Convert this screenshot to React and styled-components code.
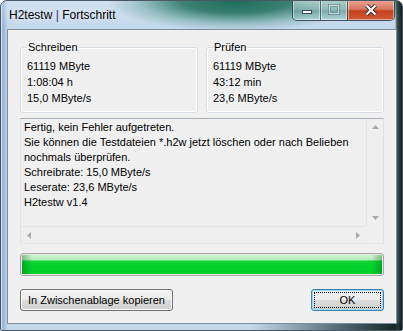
import React from "react";
import styled, { createGlobalStyle } from "styled-components";

const GlobalStyle = createGlobalStyle`
  html, body {
    margin: 0;
    padding: 0;
    background: #ffffff;
    overflow: hidden;
  }
`;

const Window = styled.div`
  box-sizing: border-box;
  width: 403px;
  height: 331px;
  display: flex;
  flex-direction: column;
  border: 1px solid #4a5866;
  border-radius: 7px 7px 2px 2px;
  overflow: hidden;
  font-family: "Liberation Sans", Arial, sans-serif;
  background:
    linear-gradient(to right, rgba(0, 0, 0, 0) 394px, rgba(40, 60, 60, 0.85) 396px, #0f1c1c 401px),
    linear-gradient(to right, rgba(255, 255, 255, 0) 0, rgba(255, 255, 255, 0) 250px, rgba(30, 60, 60, 0.7) 340px, #102020 400px) 0 100% / 100% 7px no-repeat,
    radial-gradient(130px 30px at 235px 0px, #1c6e58 0%, rgba(30, 110, 90, 0.85) 40%, rgba(60, 140, 120, 0.35) 75%, rgba(0, 0, 0, 0) 100%),
    radial-gradient(90px 22px at 365px 0px, rgba(35, 125, 100, 0.9), rgba(0, 0, 0, 0)),
    linear-gradient(to bottom, rgba(255, 255, 255, 0.25) 0px, rgba(255, 255, 255, 0) 28px),
    linear-gradient(to right, #dfe9f4 0px, #8fb0d2 2px, #aac6e3 4px, #c4d8ec 7px, #c4d8ec 100%);
`;

const TitleBar = styled.div`
  height: 28px;
  flex: none;
  display: flex;
  align-items: flex-start;
  justify-content: space-between;
  padding: 0 7px 0 8px;
`;

const Title = styled.span`
  margin-top: 7px;
  font-size: 12px;
  line-height: 15px;
  color: #000;
  text-shadow: 0 0 6px rgba(255, 255, 255, 0.9);
`;

const Pipe = styled.span`
  color: #3b1f8e;
`;

const CaptionGroup = styled.div`
  display: flex;
  margin-top: -1px;
  border: 1px solid rgba(45, 62, 80, 0.85);
  border-top: none;
  border-radius: 0 0 5px 5px;
  overflow: hidden;
`;

const CaptionButton = styled.div`
  width: ${(p) => p.$w}px;
  height: 20px;
  display: flex;
  align-items: center;
  justify-content: center;
  box-sizing: border-box;
  border-left: ${(p) => (p.$first ? "none" : "1px solid rgba(45, 62, 80, 0.7)")};
  box-shadow: inset 0 0 0 1px rgba(255, 255, 255, 0.45);
  background: ${(p) =>
    p.$close
      ? "linear-gradient(to bottom, #eaa596 0%, #d9785f 45%, #c4401e 55%, #cf5c36 100%)"
      : "linear-gradient(to bottom, rgba(255,255,255,0.55) 0%, rgba(205,225,235,0.35) 45%, rgba(120,170,170,0.35) 55%, rgba(170,210,215,0.45) 100%)"};
`;

const GlyphSvg = styled.svg`
  display: block;
  opacity: ${(p) => (p.$disabled ? 0.45 : 1)};
`;

const Client = styled.div`
  flex: 1;
  margin: 0 5px 6px 6px;
  border: 1px solid #7d8d9c;
  background: #f0f0f0;
  display: flex;
  flex-direction: column;
  padding: 10px 12px 12px 12px;
`;

const Groups = styled.div`
  display: grid;
  grid-template-columns: 178px 178px;
  column-gap: 8px;
`;

const Group = styled.fieldset`
  margin: 0;
  height: 73px;
  box-sizing: border-box;
  border: 1px solid #d5dfe5;
  border-radius: 3px;
  box-shadow: inset 0 0 0 1px #ffffff;
  padding: 0 6px 0 6px;
  min-width: 0;
`;

const Legend = styled.legend`
  font-size: 11px;
  line-height: 14px;
  padding: 0 1px;
  margin-left: 0;
  color: #000;
`;

const Value = styled.div`
  font-size: 11px;
  line-height: 16px;
  color: #000;
  white-space: nowrap;
  &:first-of-type {
    margin-top: 4px;
  }
`;

const LogBox = styled.div`
  margin-top: 5px;
  height: 126px;
  box-sizing: border-box;
  border: 1px solid #abadb3;
  border-left-color: #e2e3ea;
  border-right-color: #dbdfe6;
  border-bottom-color: #e3e9ef;
  background: #f0f0f0;
  display: grid;
  grid-template-columns: 1fr 17px;
  grid-template-rows: 1fr 17px;
`;

const LogText = styled.div`
  padding: 1px 3px 0 3px;
  font-size: 11px;
  line-height: 15px;
  color: #000;
  white-space: nowrap;
  overflow: hidden;
`;

const ScrollBar = styled.div`
  display: flex;
  flex-direction: ${(p) => (p.$vertical ? "column" : "row")};
  justify-content: space-between;
  align-items: center;
  background: #efefef;
  border-left: ${(p) => (p.$vertical ? "1px solid #e4e4e4" : "none")};
  border-top: ${(p) => (p.$vertical ? "none" : "1px solid #e4e4e4")};
  box-sizing: border-box;
`;

const ArrowCell = styled.div`
  width: 16px;
  height: 16px;
  display: flex;
  align-items: center;
  justify-content: center;
`;

const Corner = styled.div`
  background: #f0f0f0;
`;

const Progress = styled.div`
  margin-top: 9px;
  height: 23px;
  box-sizing: border-box;
  border: 1px solid #a7a7a7;
  border-radius: 3px;
  padding: 1px;
  background: #e6e6e6;
`;

const ProgressFill = styled.div`
  height: 100%;
  border-radius: 1px;
  background:
    linear-gradient(to right, rgba(0, 90, 20, 0.35) 0px, rgba(0, 90, 20, 0) 10px, rgba(0, 90, 20, 0) calc(100% - 10px), rgba(0, 90, 20, 0.35) 100%),
    linear-gradient(to bottom, #cdf3d0 0%, #b3ecba 25%, #14d43a 32%, #00d12a 60%, #00cf2c 100%);
`;

const ButtonRow = styled.div`
  margin-top: 13px;
  display: flex;
  justify-content: space-between;
`;

const Button = styled.div`
  position: relative;
  width: ${(p) => p.$w}px;
  height: 22px;
  box-sizing: border-box;
  border: 1px solid ${(p) => (p.$default ? "#3c7fb1" : "#707070")};
  border-radius: 3px;
  display: flex;
  align-items: center;
  justify-content: center;
  font-size: 11px;
  color: #000;
  background: linear-gradient(to bottom, #f2f2f2 0%, #ebebeb 50%, #dddddd 51%, #cfcfcf 100%);
  box-shadow: inset 0 0 0 1px ${(p) => (p.$default ? "#9fd6f3" : "#fcfcfc")};
  ${(p) =>
    p.$default &&
    `
    &::after {
      content: "";
      position: absolute;
      inset: 2px;
      border: 1px dotted #000;
    }
  `}
`;

function Arrow({ dir }) {
  const pts = {
    up: "0,4 3.5,0 7,4",
    down: "0,0 3.5,4 7,0",
    left: "4,0 0,3.5 4,7",
    right: "0,0 4,3.5 0,7",
  }[dir];
  const vertical = dir === "up" || dir === "down";
  return (
    <svg width={vertical ? 7 : 4} height={vertical ? 4 : 7}>
      <polygon points={pts} fill="#a9a9a9" />
    </svg>
  );
}

export default function App() {
  return (
    <>
      <GlobalStyle />
      <Window>
        <TitleBar>
          <Title>
            H2testw <Pipe>|</Pipe> Fortschritt
          </Title>
          <CaptionGroup>
            <CaptionButton $w={27} $first>
              <GlyphSvg width="12" height="12" viewBox="0 0 12 12">
                <rect x="1.5" y="6.5" width="9" height="3" fill="#fff" stroke="#3a4652" />
              </GlyphSvg>
            </CaptionButton>
            <CaptionButton $w={27}>
              <GlyphSvg width="12" height="12" viewBox="0 0 12 12" $disabled>
                <rect x="1.5" y="1.5" width="9" height="8" fill="none" stroke="#3a4652" strokeWidth="3" />
                <rect x="1.5" y="1.5" width="9" height="8" fill="none" stroke="#fff" strokeWidth="1.4" />
              </GlyphSvg>
            </CaptionButton>
            <CaptionButton $w={47} $close>
              <GlyphSvg width="14" height="12" viewBox="0 0 14 12">
                <path d="M2.5 1.5 L11.5 10.5 M11.5 1.5 L2.5 10.5" stroke="#3b2a2a" strokeWidth="4" />
                <path d="M2.5 1.5 L11.5 10.5 M11.5 1.5 L2.5 10.5" stroke="#fff" strokeWidth="2.2" />
              </GlyphSvg>
            </CaptionButton>
          </CaptionGroup>
        </TitleBar>

        <Client>
          <Groups>
            <Group>
              <Legend>Schreiben</Legend>
              <Value>61119 MByte</Value>
              <Value>1:08:04 h</Value>
              <Value>15,0 MByte/s</Value>
            </Group>
            <Group>
              <Legend>Prüfen</Legend>
              <Value>61119 MByte</Value>
              <Value>43:12 min</Value>
              <Value>23,6 MByte/s</Value>
            </Group>
          </Groups>

          <LogBox>
            <LogText>
              Fertig, kein Fehler aufgetreten.
              <br />
              Sie können die Testdateien *.h2w jetzt löschen oder nach Belieben
              <br />
              nochmals überprüfen.
              <br />
              Schreibrate: 15,0 MByte/s
              <br />
              Leserate: 23,6 MByte/s
              <br />
              H2testw v1.4
            </LogText>
            <ScrollBar $vertical>
              <ArrowCell>
                <Arrow dir="up" />
              </ArrowCell>
              <ArrowCell>
                <Arrow dir="down" />
              </ArrowCell>
            </ScrollBar>
            <ScrollBar>
              <ArrowCell>
                <Arrow dir="left" />
              </ArrowCell>
              <ArrowCell>
                <Arrow dir="right" />
              </ArrowCell>
            </ScrollBar>
            <Corner />
          </LogBox>

          <Progress>
            <ProgressFill />
          </Progress>

          <ButtonRow>
            <Button $w={153}>In Zwischenablage kopieren</Button>
            <Button $w={73} $default>
              OK
            </Button>
          </ButtonRow>
        </Client>
      </Window>
    </>
  );
}
